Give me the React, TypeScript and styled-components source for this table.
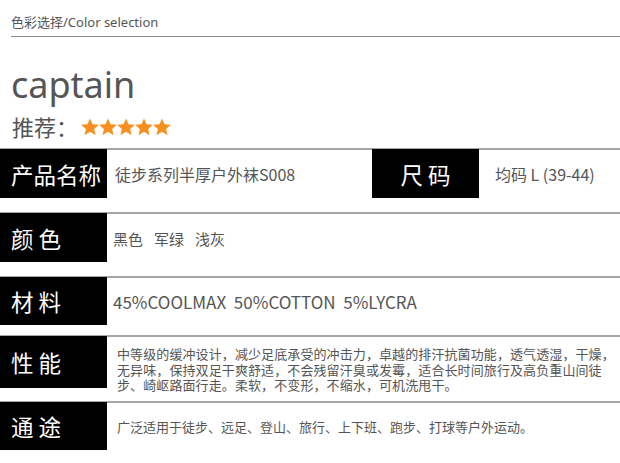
import React from 'react'
import styled, { createGlobalStyle } from 'styled-components'

const GlobalStyle = createGlobalStyle`
  body {
    margin: 0;
    background: #fff;
    font-family: "Noto Sans", "Noto Sans CJK SC", sans-serif;
  }
`

const Page = styled.main`
  width: 620px;
  height: 463px;
  overflow: hidden;
  background: #fff;
`

const Header = styled.header`
  margin-left: 11px;
  padding-top: 12px;
  height: 24px;
  border-bottom: 1px solid #8a8a8a;
  color: #555;
  font-size: 13px;
  line-height: 20px;
`

const Title = styled.h1`
  margin: 28px 0 0 11px;
  color: #555;
  font-size: 36px;
  font-weight: 400;
  line-height: 40px;
`

const Rating = styled.div`
  display: flex;
  align-items: center;
  margin: 9px 0 0 12px;
  height: 26px;
  color: #555;
  font-size: 22px;
  line-height: 26px;
`

const Stars = styled.span`
  display: flex;
  margin-left: 3px;
`

const Table = styled.section`
  margin-top: 8px;
  display: flex;
  flex-direction: column;
`

const Row = styled.div<{ $h: number; $gap?: number }>`
  display: flex;
  align-items: stretch;
  box-sizing: border-box;
  height: ${(p) => p.$h}px;
  margin-bottom: ${(p) => p.$gap ?? 0}px;
  border-top: 2px solid #a6a6a6;
`

const Label = styled.div<{ $center?: boolean }>`
  flex: none;
  width: 107px;
  margin-top: -1px;
  background: #000;
  color: #fff;
  font-family: "Noto Sans CJK SC", sans-serif;
  font-size: 22.5px;
  display: flex;
  align-items: center;
  justify-content: ${(p) => (p.$center ? 'center' : 'flex-start')};
  padding-left: ${(p) => (p.$center ? 0 : 11)}px;
  box-sizing: border-box;
  white-space: pre;
`

const Value = styled.div<{ $size?: number; $w?: number; $pad?: number }>`
  ${(p) => (p.$w ? `width: ${p.$w}px; flex: none;` : 'flex: 1;')}
  display: flex;
  align-items: center;
  gap: 11px;
  padding-left: ${(p) => p.$pad ?? 8}px;
  box-sizing: border-box;
  color: #555;
  font-family: "Noto Sans CJK SC", sans-serif;
  font-size: ${(p) => p.$size ?? 15}px;
  white-space: pre;
`

const Paragraph = styled.p`
  flex: 1;
  margin: 0;
  padding: 9px 0 0 10px;
  color: #555;
  font-family: "Noto Sans CJK SC", sans-serif;
  font-size: 13px;
  letter-spacing: 0.1px;
  line-height: 15.5px;
`

const Star = () => (
  <svg width="18" height="18" viewBox="1 1.5 22 21">
    <path
      fill="#f7901e"
      d="M12 1.5l3.1 7.2 7.8.6-5.9 5.1 1.8 7.6L12 17.9 5.2 22l1.8-7.6-5.9-5.1 7.8-.6z"
    />
  </svg>
)

export default function App() {
  return (
    <Page>
      <GlobalStyle />
      <Header>色彩选择/Color selection</Header>
      <Title>captain</Title>
      <Rating>
        推荐：
        <Stars>
          {[0, 1, 2, 3, 4].map((i) => (
            <Star key={i} />
          ))}
        </Stars>
      </Rating>
      <Table>
        <Row $h={50} $gap={14}>
          <Label>产品名称</Label>
          <Value $w={265} $size={16}>徒步系列半厚户外袜S008</Value>
          <Label $center>尺 码</Label>
          <Value $size={16} $pad={16}>均码 L (39-44)</Value>
        </Row>
        <Row $h={50} $gap={14}>
          <Label>{'颜 色'}</Label>
          <Value $pad={6}>
            <span>黑色</span>
            <span>军绿</span>
            <span>浅灰</span>
          </Value>
        </Row>
        <Row $h={49} $gap={10}>
          <Label>{'材 料'}</Label>
          <Value $size={17} $pad={6}>45%COOLMAX  50%COTTON  5%LYCRA</Value>
        </Row>
        <Row $h={53} $gap={13}>
          <Label>{'性 能'}</Label>
          <Paragraph>
            中等级的缓冲设计，减少足底承受的冲击力，卓越的排汗抗菌功能，透气透湿，干燥，无异味，保持双足干爽舒适，不会残留汗臭或发霉，适合长时间旅行及高负重山间徒步、崎岖路面行走。柔软，不变形，不缩水，可机洗甩干。
          </Paragraph>
        </Row>
        <Row $h={49}>
          <Label>{'通 途'}</Label>
          <Value $size={13} $pad={10}>
            广泛适用于徒步、远足、登山、旅行、上下班、跑步、打球等户外运动。
          </Value>
        </Row>
      </Table>
    </Page>
  )
}
